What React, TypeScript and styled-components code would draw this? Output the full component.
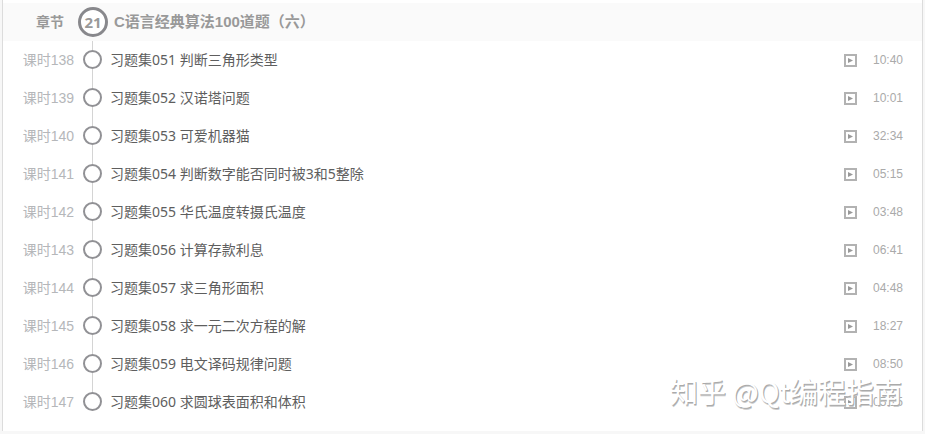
import React from "react";
import styled, { createGlobalStyle } from "styled-components";

const GlobalStyle = createGlobalStyle`
  * { box-sizing: border-box; }
  body {
    margin: 0;
    background: #f7f7f7;
    font-family: "Liberation Sans", "Noto Sans CJK SC", sans-serif;
  }
`;

const Card = styled.main`
  position: relative;
  margin: 0 2px;
  padding: 3px 0 10px;
  background: #fff;
  border: solid #dcdcdc;
  border-width: 0 1px;
`;

const ChapterHeader = styled.header`
  display: grid;
  grid-template-columns: 75px 30px 1fr;
  align-items: center;
  height: 38px;
  background: #fafafa;
  color: #999;
  font-weight: 700;
`;

const ChapterLabel = styled.span`
  padding-right: 14px;
  font-size: 14px;
  line-height: 20px;
  text-align: right;
`;

const ChapterNumber = styled.span`
  display: flex;
  align-items: center;
  justify-content: center;
  height: 30px;
  border: 3px solid #88888c;
  border-radius: 50%;
  background: #fff;
  font-family: "Open Sans", "Noto Sans", sans-serif;
  font-size: 15px;
  font-weight: 700;
  line-height: 20px;
`;

const ChapterTitle = styled.h2`
  margin: 0;
  padding-left: 6px;
  font-size: 15px;
  line-height: 20px;
`;

const LessonList = styled.ol`
  margin: 0;
  padding: 0;
  list-style: none;
`;

const LessonRow = styled.li`
  display: grid;
  grid-template-columns: 71px 36px 1fr auto auto;
  align-items: center;
  height: 38px;
  padding-right: 19px;
`;

const LessonLabel = styled.span`
  color: #b5b7ba;
  font-size: 14px;
  line-height: 20px;
  text-align: right;
`;

const Track = styled.span<{ $last: boolean }>`
  display: grid;
  grid-template-rows: 9px 19px 10px;
  justify-items: center;
  height: 38px;

  &::before,
  &::after {
    content: "";
    width: 1px;
    height: 100%;
    background: #d4d4d4;
  }

  &::after {
    visibility: ${({ $last }) => ($last ? "hidden" : "visible")};
  }
`;

const Dot = styled.span`
  width: 19px;
  height: 19px;
  border: 2px solid #919195;
  border-radius: 50%;
`;

const LessonLink = styled.a`
  justify-self: start;
  color: #5e5e5e;
  font-family: "Noto Sans", "Noto Sans CJK SC", sans-serif;
  font-size: 14px;
  line-height: 20px;
  text-decoration: none;
`;

const PlayIcon = styled.svg`
  display: block;
  width: 13px;
  height: 13px;
  margin-top: 1px;
`;

const Duration = styled.time`
  margin-left: 16px;
  color: #aaa;
  font-size: 12px;
  line-height: 16px;
`;

const Watermark = styled.span`
  position: absolute;
  right: 20px;
  bottom: 22px;
  color: #fff;
  font-family: "Noto Sans CJK SC", sans-serif;
  font-size: 28px;
  line-height: 36px;
  text-shadow: 1px 1px 0 #aaa, 1px 2px 0 #ccc;
  pointer-events: none;
`;

const lessons = [
  ["138", "习题集051 判断三角形类型", "10:40"],
  ["139", "习题集052 汉诺塔问题", "10:01"],
  ["140", "习题集053 可爱机器猫", "32:34"],
  ["141", "习题集054 判断数字能否同时被3和5整除", "05:15"],
  ["142", "习题集055 华氏温度转摄氏温度", "03:48"],
  ["143", "习题集056 计算存款利息", "06:41"],
  ["144", "习题集057 求三角形面积", "04:48"],
  ["145", "习题集058 求一元二次方程的解", "18:27"],
  ["146", "习题集059 电文译码规律问题", "08:50"],
  ["147", "习题集060 求圆球表面积和体积", "05:15"],
];

export default function App() {
  return (
    <>
      <GlobalStyle />
      <Card>
        <ChapterHeader>
          <ChapterLabel>章节</ChapterLabel>
          <ChapterNumber>21</ChapterNumber>
          <ChapterTitle>C语言经典算法100道题（六）</ChapterTitle>
        </ChapterHeader>
        <LessonList>
          {lessons.map(([number, title, duration], index) => (
            <LessonRow key={number}>
              <LessonLabel>课时{number}</LessonLabel>
              <Track $last={index === lessons.length - 1}>
                <Dot />
              </Track>
              <LessonLink href="#">{title}</LessonLink>
              <PlayIcon viewBox="0 0 13 13" aria-hidden="true">
                <rect x="1" y="1" width="11" height="11" fill="none" stroke="#b2b2b2" strokeWidth="2" />
                <path d="M4 4 9 6.5 4 9Z" fill="#999" />
              </PlayIcon>
              <Duration>{duration}</Duration>
            </LessonRow>
          ))}
        </LessonList>
        <Watermark>知乎 @Qt编程指南</Watermark>
      </Card>
    </>
  );
}
